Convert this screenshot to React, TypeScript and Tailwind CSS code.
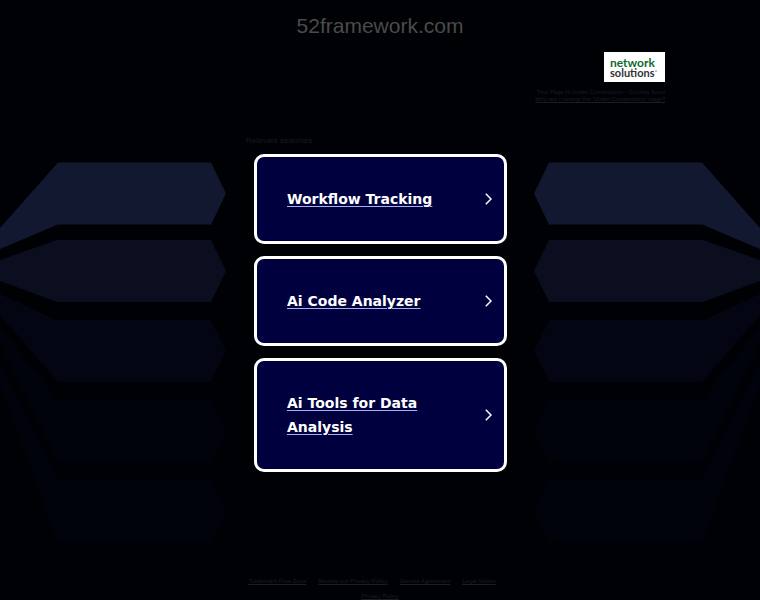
interface Search {
  label: string;
  href: string;
}

const searches: Search[] = [
  { label: "Workflow Tracking", href: "#workflow-tracking" },
  { label: "Ai Code Analyzer", href: "#ai-code-analyzer" },
  { label: "Ai Tools for Data Analysis", href: "#ai-tools" },
];

const footerLinks = [
  "Trademark Free Zone",
  "Review our Privacy Policy",
  "Service Agreement",
  "Legal Notice",
];

const Arms = ({ className }: { className: string }) => (
  <svg
    className={className}
    width="226"
    height="382"
    viewBox="0 162 226 382"
    aria-hidden="true"
  >
    <path d="M0 228L58 162.5H211L226 193.5L211 224.5H58L0 249Z" fill="#12182f" />
    <path d="M0 260L57 240H211L226 271L211 302H57L0 281Z" fill="#0a0e1e" />
    <path d="M0 294L56 320H211L226 351L211 382H58L0 315Z" fill="#030512" />
    <path d="M0 326L58 400H211L226 431L211 462H58L0 344Z" fill="#01030c" />
    <path d="M0 362L58 479.5H211L226 511L211 542H58L0 385Z" fill="#01030c" />
  </svg>
);

const Logo = () => (
  <div className="flex h-[30px] w-[61px] flex-col justify-center bg-white pt-px pl-[6px] font-['Lato',sans-serif] leading-[10px] font-bold">
    <span className="text-[12px] text-[#0b6b2d]">network</span>
    <span className="flex text-[11px] text-[#333]">
      solutions
      <svg width="2" height="10" viewBox="0 0 2 10" aria-hidden="true">
        <circle cx="1" cy="3" r="0.8" fill="#777" />
      </svg>
    </span>
  </div>
);

const SearchCard = ({ label, href }: Search) => (
  <a
    href={href}
    className="flex items-center justify-between rounded-[10px] border-3 border-white bg-[#00003f] py-[30px] pr-3 pl-[30px] text-white"
  >
    <span className="max-w-40 font-['DejaVu_Sans',sans-serif] text-[14px] leading-6 font-bold underline decoration-[#a3b3ee] decoration-1 underline-offset-2">
      {label}
    </span>
    <svg width="7" height="12" viewBox="0 0 7 12" fill="none" aria-hidden="true">
      <path d="M0.8 0.8L6 6L0.8 11.2" stroke="#fff" strokeWidth="1.5" />
    </svg>
  </a>
);

const App = () => {
  return (
    <div className="relative flex min-h-screen flex-col overflow-hidden bg-[#000104] font-['Liberation_Sans',Arial,sans-serif]">
      <div className="pointer-events-none absolute inset-x-0 top-[162px] flex justify-between">
        <Arms className="" />
        <Arms className="-scale-x-100" />
      </div>

      <div className="relative flex flex-1 flex-col items-center">
        <h1 className="h-13 text-[21px] leading-[52px] text-[#4b4b4b]">52framework.com</h1>

        <header className="flex w-3/4 flex-col items-end text-[6px] leading-[7px] text-[#1c1c28]">
          <Logo />
          <p className="mt-[7px]">This Page Is Under Construction - Coming Soon</p>
          <a href="#why" className="underline">
            Why am I seeing this &#39;Under Construction&#39; page?
          </a>
        </header>

        <main className="mt-8 w-[268px]">
          <h2 className="text-[8px] leading-3 text-[#191922]">Relevant searches</h2>
          <div className="mt-[7px] ml-2 flex w-[253px] flex-col gap-3">
            {searches.map((search) => (
              <SearchCard key={search.label} {...search} />
            ))}
          </div>
        </main>

        <footer className="mt-auto flex flex-col items-center gap-2 text-[6px] leading-[7px] text-[#1c1c24]">
          <nav className="flex gap-3 pr-4">
            {footerLinks.map((link) => (
              <a key={link} href="#legal" className="underline">
                {link}
              </a>
            ))}
          </nav>
          <a href="#privacy" className="underline">
            Privacy Policy
          </a>
        </footer>
      </div>
    </div>
  );
};

export default App;
